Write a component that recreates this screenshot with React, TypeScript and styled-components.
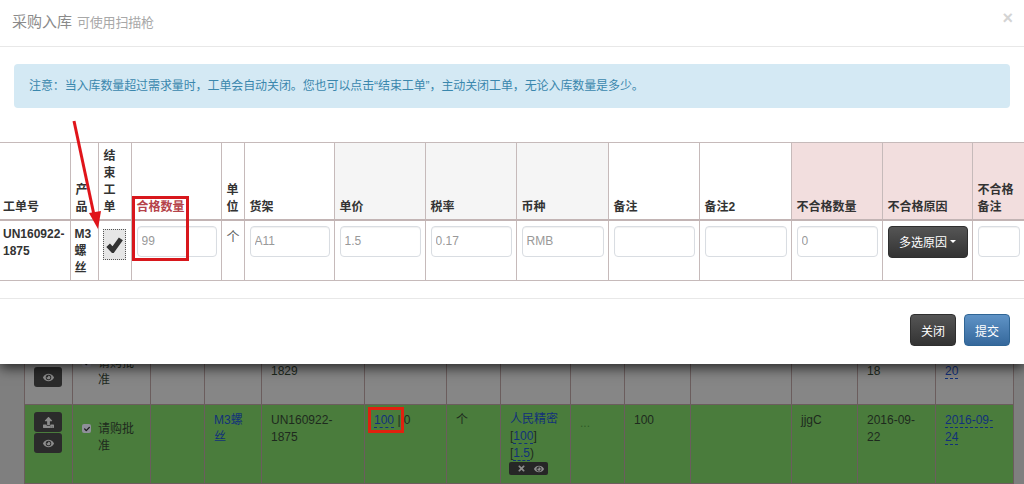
import React from "react";
import styled, { createGlobalStyle } from "styled-components";
import { FaCheck, FaEye, FaTimes, FaUpload } from "react-icons/fa";

const FONT = `"Liberation Sans", "Noto Sans CJK SC", sans-serif`;

const modalColumns = [70, 28, 33, 90, 23, 90, 91, 91, 92, 91, 92, 91, 90, 52];
const pageColumns = [48, 78, 54, 57, 103, 82, 54, 70, 54, 66, 101, 66, 78, 78];

const App = () => {
  return (
    <Page>
      <GlobalStyle />
      <PageTable>
        <colgroup>
          {pageColumns.map((w, i) => (
            <col key={i} style={{ width: w }} />
          ))}
        </colgroup>
        <tbody>
          <PageRow $height={66}>
            <td>
              <IconBtn $spaced>
                <FaEye size={11} />
              </IconBtn>
            </td>
            <StatusCell>
              <FakeCheck>
                <FaCheck size={6} />
              </FakeCheck>
              <span>请购批准</span>
            </StatusCell>
            <td />
            <td />
            <td>UN160922-1829</td>
            <td />
            <td />
            <td />
            <td />
            <td />
            <td />
            <td />
            <td>2016-09-18</td>
            <td>
              <DashLink>2016-09-</DashLink>
              <br />
              <DashLink>20</DashLink>
            </td>
          </PageRow>
          <PageRow $height={79} $green>
            <td>
              <IconBtn>
                <FaUpload size={11} />
              </IconBtn>
              <IconBtn>
                <FaEye size={11} />
              </IconBtn>
            </td>
            <StatusCell>
              <FakeCheck>
                <FaCheck size={6} />
              </FakeCheck>
              <span>请购批准</span>
            </StatusCell>
            <td />
            <td>
              <PlainLink>M3螺丝</PlainLink>
            </td>
            <td>UN160922-1875</td>
            <td>
              <QtyBox>
                <DashLink>100</DashLink>
                <Mark />
              </QtyBox>{" "}
              | 0
            </td>
            <td>个</td>
            <SupplierCell>
              <PlainLink>人民精密</PlainLink>
              <br />[<DashLink>100</DashLink>]
              <br />[<DashLink>1.5</DashLink>)
              <MiniGroup>
                <FaTimes size={9} />
                <FaEye size={10} />
              </MiniGroup>
            </SupplierCell>
            <EllipsisCell>...</EllipsisCell>
            <td>100</td>
            <td />
            <td>jjgC</td>
            <td>2016-09-22</td>
            <td>
              <DashLink>2016-09-</DashLink>
              <br />
              <DashLink>24</DashLink>
            </td>
          </PageRow>
        </tbody>
      </PageTable>

      <Modal>
        <ModalHeader>
          <ModalTitle>采购入库</ModalTitle>
          <ModalHint>可使用扫描枪</ModalHint>
          <CloseX>×</CloseX>
        </ModalHeader>
        <AlertWrap>
          <Alert>
            注意：当入库数量超过需求量时，工单会自动关闭。您也可以点击“结束工单”，主动关闭工单，无论入库数量是多少。
          </Alert>
        </AlertWrap>
        <TableClip>
          <EntryTable>
            <colgroup>
              {modalColumns.map((w, i) => (
                <col key={i} style={{ width: w }} />
              ))}
            </colgroup>
            <thead>
              <tr>
                <Th $tight>工单号</Th>
                <Th>产品</Th>
                <Th>结束工单</Th>
                <Th $red>合格数量</Th>
                <Th>单位</Th>
                <Th>货架</Th>
                <Th $tone="grey">单价</Th>
                <Th $tone="grey">税率</Th>
                <Th $tone="grey">币种</Th>
                <Th>备注</Th>
                <Th>备注2</Th>
                <Th $tone="pink">不合格数量</Th>
                <Th $tone="pink">不合格原因</Th>
                <Th $tone="pink">不合格备注</Th>
              </tr>
            </thead>
            <tbody>
              <tr>
                <BoldTd $tight>UN160922-1875</BoldTd>
                <BoldTd>M3螺丝</BoldTd>
                <Td>
                  <BigCheck>
                    <svg width="17" height="17" viewBox="0 0 24 24">
                      <polyline
                        points="3,13 9.5,20 21,4"
                        fill="none"
                        stroke="#333"
                        strokeWidth="7"
                      />
                    </svg>
                  </BigCheck>
                </Td>
                <Td>
                  <Field readOnly value="99" />
                </Td>
                <UnitTd>个</UnitTd>
                <Td>
                  <Field readOnly value="A11" />
                </Td>
                <Td>
                  <Field readOnly value="1.5" />
                </Td>
                <Td>
                  <Field readOnly value="0.17" />
                </Td>
                <Td>
                  <Field readOnly value="RMB" />
                </Td>
                <Td>
                  <Field readOnly />
                </Td>
                <Td>
                  <Field readOnly />
                </Td>
                <Td>
                  <Field readOnly value="0" />
                </Td>
                <Td>
                  <DarkBtn $wide>
                    多选原因 <Caret />
                  </DarkBtn>
                </Td>
                <Td>
                  <Field readOnly />
                </Td>
              </tr>
            </tbody>
          </EntryTable>
        </TableClip>
        <ModalFooter>
          <DarkBtn>关闭</DarkBtn>
          <BlueBtn>提交</BlueBtn>
        </ModalFooter>

        <RedBox />
        <Arrow width="30" height="112" viewBox="0 0 30 112">
          <line x1="3" y1="2" x2="23" y2="96" stroke="#e0141a" strokeWidth="3" />
          <polygon points="18,94 30,92 27,110" fill="#e0141a" />
        </Arrow>
      </Modal>
    </Page>
  );
};

const GlobalStyle = createGlobalStyle`
  html, body {
    margin: 0;
    padding: 0;
    background: #7f7f7f;
  }
  * {
    box-sizing: border-box;
  }
`;

const Page = styled.div`
  position: relative;
  width: 1024px;
  height: 484px;
  overflow: hidden;
  padding: 338px 0 0 24px;
  background: #7f7f7f;
  font-family: ${FONT};
  font-size: 12px;
  line-height: 17px;
  color: #1e2a1e;
`;

const PageTable = styled.table`
  width: 989px;
  table-layout: fixed;
  border-collapse: collapse;
  border: 1px solid #6b5d5d;
`;

const PageRow = styled.tr<{ $height: number; $green?: boolean }>`
  height: ${({ $height }) => $height}px;
  background: ${({ $green }) => ($green ? "#4a7c3c" : "#868686")};
  > td {
    position: relative;
    padding: 7px 9px;
    vertical-align: top;
    border: 1px solid #6b5d5d;
  }
`;

const IconBtn = styled.div<{ $spaced?: boolean }>`
  display: flex;
  align-items: center;
  justify-content: center;
  width: 28px;
  height: 20px;
  margin-top: ${({ $spaced }) => ($spaced ? "21px" : "0")};
  margin-bottom: 1px;
  border-radius: 3px;
  background: #2b2b2b;
  color: #8c8c8c;
`;

const StatusCell = styled.td`
  && {
    padding: 16px 6px 0 9px;
  }
  span {
    display: block;
    margin-left: 16px;
  }
`;

const FakeCheck = styled.div`
  position: absolute;
  left: 9px;
  top: 19px;
  display: flex;
  align-items: center;
  justify-content: center;
  width: 9px;
  height: 9px;
  border-radius: 2px;
  background: #8f8f9a;
  color: #1b1b1b;
`;

const PlainLink = styled.span`
  color: #12317a;
`;

const DashLink = styled.span`
  color: #12317a;
  border-bottom: 1px dashed #12317a;
`;

const QtyBox = styled.span`
  position: relative;
`;

const Mark = styled.i`
  position: absolute;
  left: -6px;
  top: -6px;
  width: 36px;
  height: 26px;
  border: 3px solid #e0210f;
`;

const SupplierCell = styled.td`
  && {
    padding: 6px 0 0 9px;
    white-space: nowrap;
  }
`;

const MiniGroup = styled.div`
  display: flex;
  align-items: center;
  justify-content: flex-end;
  gap: 8px;
  width: 39px;
  height: 13px;
  margin: 0 0 0 -1px;
  padding-right: 4px;
  border-radius: 2px;
  background: #262626;
  color: #8c8c8c;
`;

const EllipsisCell = styled.td`
  && {
    padding-top: 10px;
    color: #2f5d26;
  }
`;

const Modal = styled.div`
  position: absolute;
  left: 0;
  top: 0;
  width: 1024px;
  height: 364px;
  background: #fff;
  box-shadow: 0 4px 12px rgba(0, 0, 0, 0.7);
`;

const ModalHeader = styled.div`
  display: flex;
  align-items: baseline;
  gap: 5px;
  height: 47px;
  padding: 13px 11px 0 12px;
  border-bottom: 1px solid #e8e8e8;
`;

const ModalTitle = styled.span`
  font-size: 15px;
  line-height: 18px;
  color: #8a8a8a;
`;

const ModalHint = styled.span`
  font-size: 13px;
  letter-spacing: -0.2px;
  color: #a8a8a8;
`;

const CloseX = styled.span`
  align-self: flex-start;
  margin-left: auto;
  margin-top: -2px;
  font-size: 18px;
  line-height: 14px;
  font-weight: bold;
  color: #d4d4d4;
`;

const Alert = styled.div`
  height: 44px;
  padding: 14px 15px 0;
  border-radius: 4px;
  background: #d4e9f4;
  font-size: 12px;
  line-height: 16px;
  letter-spacing: -0.1px;
  color: #3a87ad;
`;

const AlertWrap = styled.div`
  height: 95px;
  padding: 17px 14px 0;
`;

const TableClip = styled.div`
  width: 1024px;
  height: 157px;
  overflow: hidden;
  border-bottom: 1px solid #e8e8e8;
`;

const EntryTable = styled.table`
  width: 1024px;
  table-layout: fixed;
  border-collapse: collapse;
`;

const Th = styled.th<{ $tone?: "grey" | "pink"; $red?: boolean; $tight?: boolean }>`
  height: 77px;
  padding: 3px ${({ $tight }) => ($tight ? "3px" : "5px")} 3px;
  vertical-align: bottom;
  text-align: left;
  font-size: 12px;
  line-height: 17px;
  font-weight: bold;
  color: ${({ $red }) => ($red ? "#b5434a" : "#333")};
  background: ${({ $tone }) =>
    $tone === "grey" ? "#f5f5f5" : $tone === "pink" ? "#f2dede" : "#fff"};
  border: 1px solid #c6baba;
  border-bottom: 2px solid #c2b4b4;
  &:first-child {
    border-left: 0;
  }
  &:last-child {
    border-right: 0;
  }
`;

const Td = styled.td`
  height: 61px;
  padding: 5px 4px 0 5px;
  vertical-align: top;
  border: 1px solid #c6baba;
  &:first-child {
    border-left: 0;
  }
  &:last-child {
    border-right: 0;
  }
`;

const BoldTd = styled(Td)<{ $tight?: boolean }>`
  padding: 5px 2px 0 ${({ $tight }) => ($tight ? "3px" : "4px")};
  font-size: 12px;
  line-height: 17px;
  font-weight: bold;
  color: #333;
`;

const UnitTd = styled(Td)`
  padding-top: 7px;
  font-size: 13px;
  color: #666;
`;

const Field = styled.input`
  display: block;
  width: 100%;
  height: 31px;
  padding: 0 4px;
  border: 1px solid #d9dde2;
  border-radius: 4px;
  outline: none;
  background: #fff;
  box-shadow: inset 0 1px 1px rgba(0, 0, 0, 0.06);
  font-family: ${FONT};
  font-size: 12px;
  color: #999;
`;

const BigCheck = styled.div`
  display: flex;
  align-items: center;
  justify-content: center;
  width: 23px;
  height: 31px;
  margin: 3px 0 0 -1px;
  border: 1px dotted #555;
  background: #e6e6e6;
`;

const DarkBtn = styled.button<{ $wide?: boolean }>`
  display: flex;
  align-items: center;
  justify-content: center;
  gap: 3px;
  width: ${({ $wide }) => ($wide ? "80px" : "46px")};
  height: 32px;
  padding: 0;
  border: 1px solid #2f2f2f;
  border-radius: 4px;
  background: linear-gradient(#555, #333);
  font-family: ${FONT};
  font-size: 12px;
  color: #fff;
`;

const BlueBtn = styled(DarkBtn)`
  border-color: #2f6595;
  background: linear-gradient(#5f93c6, #35689c);
`;

const Caret = styled.i`
  width: 0;
  height: 0;
  border-left: 3px solid transparent;
  border-right: 3px solid transparent;
  border-top: 3px solid #fff;
`;

const ModalFooter = styled.div`
  display: flex;
  justify-content: flex-end;
  gap: 8px;
  padding: 15px 14px 0;
`;

const RedBox = styled.div`
  position: absolute;
  left: 132px;
  top: 196px;
  width: 57px;
  height: 65px;
  border: 3px solid #d8171c;
`;

const Arrow = styled.svg`
  position: absolute;
  left: 71px;
  top: 119px;
`;

export default App;
